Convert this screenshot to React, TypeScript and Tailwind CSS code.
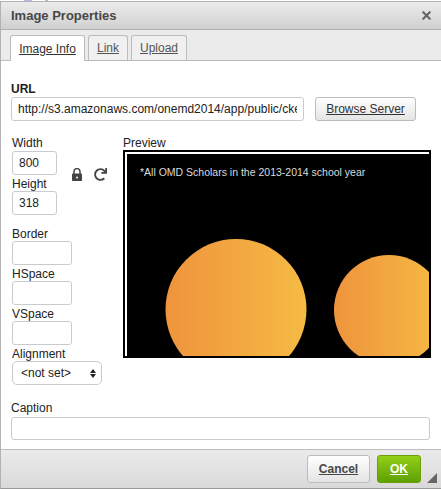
import { X } from "lucide-react";
import { FaRedo } from "react-icons/fa";

const font = "font-['Liberation_Sans',Arial,sans-serif]";

function Label({ text, className = "" }: { text: string; className?: string }) {
  return <label className={`block text-[12px] leading-[14px] text-[#222] ${className}`}>{text}</label>;
}

function Field({ value = "", className = "" }: { value?: string; className?: string }) {
  return (
    <input
      readOnly
      value={value}
      className={`block h-[24px] rounded-[3px] border border-[#c9cccf] bg-white px-[6px] text-[12px] text-[#222] outline-none ${className}`}
    />
  );
}

function Tab({ text, active }: { text: string; active?: boolean }) {
  return (
    <div
      className={
        active
          ? "relative top-px flex h-[26px] w-[75px] items-center justify-center rounded-t-[3px] border border-b-0 border-[#bcbcbc] bg-white text-[12px] text-[#333] underline"
          : "flex h-[25px] items-center justify-center rounded-t-[3px] border border-b-0 border-[#bcbcbc] bg-[#f0f0f0] text-[12px] text-[#555] underline"
      }
      style={active ? undefined : { width: text === "Link" ? 40 : 56 }}
    >
      {text}
    </div>
  );
}

function LockIcon() {
  return (
    <svg viewBox="0 0 10 13" className="h-[13px] w-[10px] shrink-0">
      <path d="M2 6V3.6a3 3 0 0 1 6 0V6" fill="none" stroke="#444" strokeWidth="1.5" />
      <rect x="0" y="5.5" width="10" height="7.5" rx="0.8" fill="#444" />
      <circle cx="5" cy="9.4" r="1" fill="#fff" />
    </svg>
  );
}

function PreviewImage() {
  return (
    <svg viewBox="0 0 302 202" className="block h-[202px] w-[302px]">
      <defs>
        <linearGradient id="sun1" x1="0" x2="1" y1="0" y2="0">
          <stop offset="0" stopColor="#ef943d" />
          <stop offset="1" stopColor="#f5bb43" />
        </linearGradient>
      </defs>
      <rect width="302" height="202" fill="#000" />
      <text x="13" y="22" fontSize="10.5" fill="#dcdcdc" fontFamily="Liberation Sans, Arial, sans-serif">
        *All OMD Scholars in the 2013-2014 school year
      </text>
      <circle cx="109" cy="155.5" r="70.5" fill="url(#sun1)" />
      <circle cx="262" cy="156" r="55" fill="url(#sun1)" />
    </svg>
  );
}

export default function App() {
  return (
    <div className={`h-[489px] w-[441px] overflow-hidden bg-white ${font}`}>
      <div className="flex h-px">
        <span className="ml-[24px] w-[8px] bg-[#b9b4ea]" />
        <span className="ml-[13px] w-[3px] bg-[#b9b4ea]" />
      </div>
      <div className="flex h-[488px] flex-col border border-r-0 border-[#b2b2b2] border-b-[#999]">
        <div className="flex h-[28px] shrink-0 items-center justify-between border-b border-[#b2b2b2] bg-gradient-to-b from-[#ebebeb] to-[#cfd1cf] pl-[10px] pr-[8px]">
          <span className="text-[13px] font-bold text-[#474747]">Image Properties</span>
          <X size={13} strokeWidth={4} className="text-[#666]" />
        </div>

        <div className="flex h-[31px] shrink-0 items-end gap-[3px] border-b border-[#bcbcbc] bg-[#ebebeb] pl-[9px]">
          <Tab text="Image Info" active />
          <Tab text="Link" />
          <Tab text="Upload" />
        </div>

        <div className="flex-1 bg-white px-[10px] pt-[21px]">
          <label className="block text-[12px] font-bold leading-[14px] text-[#222]">URL</label>
          <div className="mt-px flex items-center gap-[11px]">
            <Field value="http://s3.amazonaws.com/onemd2014/app/public/ckeditor" className="w-[293px]" />
            <button className="h-[24px] w-[101px] rounded-[3px] border border-[#bcbcbc] bg-gradient-to-b from-white to-[#e4e4e4] text-[12px] text-[#333] underline">
              Browse Server
            </button>
          </div>

          <div className="mt-[15px] flex">
            <div className="w-[112px] shrink-0 pl-px">
              <Label text="Width" />
              <div className="flex items-start">
                <div>
                  <Field value="800" className="mt-px w-[45px]" />
                  <Label text="Height" className="mt-[2px]" />
                  <Field value="318" className="w-[45px]" />
                </div>
                <div className="ml-[15px] mt-[18px] flex items-center gap-[12px] text-[#444]">
                  <LockIcon />
                  <FaRedo size={13} />
                </div>
              </div>
              <Label text="Border" className="mt-[12px]" />
              <Field className="w-[60px]" />
              <Label text="HSpace" className="mt-[2px]" />
              <Field className="w-[60px]" />
              <Label text="VSpace" className="mt-[2px]" />
              <Field className="w-[60px]" />
              <Label text="Alignment" className="mt-[2px]" />
              <div className="flex h-[24px] w-[90px] items-center justify-between rounded-[5px] border border-[#c9cccf] bg-white pl-[8px] pr-[5px] text-[12px] text-[#222]">
                <span>&lt;not set&gt;</span>
                <span className="flex flex-col gap-px">
                  <span className="h-0 w-0 border-x-[3px] border-b-[4px] border-x-transparent border-b-[#222]" />
                  <span className="h-0 w-0 border-x-[3px] border-t-[4px] border-x-transparent border-t-[#222]" />
                </span>
              </div>
            </div>
            <div>
              <Label text="Preview" />
              <div className="border-2 border-black">
                <div className="border-l-2 border-t-2 border-white">
                  <PreviewImage />
                </div>
              </div>
            </div>
          </div>

          <Label text="Caption" className="mt-[16px]" />
          <input readOnly className="mt-[2px] block h-[23px] w-[419px] rounded-[3px] border border-[#c9cccf] bg-white outline-none" />
        </div>

        <div className="relative flex h-[39px] shrink-0 items-center justify-end gap-[7px] border-t border-[#bcbcbc] bg-gradient-to-b from-[#ebebeb] to-[#d9d9d9] pr-[20px]">
          <button className="h-[28px] w-[63px] rounded-[3px] border border-[#bcbcbc] bg-gradient-to-b from-white to-[#e4e4e4] text-[12px] font-bold text-[#474747] underline">
            Cancel
          </button>
          <button className="h-[28px] w-[44px] rounded-[3px] border border-[#6b9e0a] bg-gradient-to-b from-[#92d017] to-[#5fa004] text-[12px] font-bold text-white underline">
            OK
          </button>
          <span className="absolute bottom-[5px] right-[4px] h-0 w-0 border-b-[10px] border-l-[10px] border-b-[#666] border-l-transparent" />
        </div>
      </div>
    </div>
  );
}
